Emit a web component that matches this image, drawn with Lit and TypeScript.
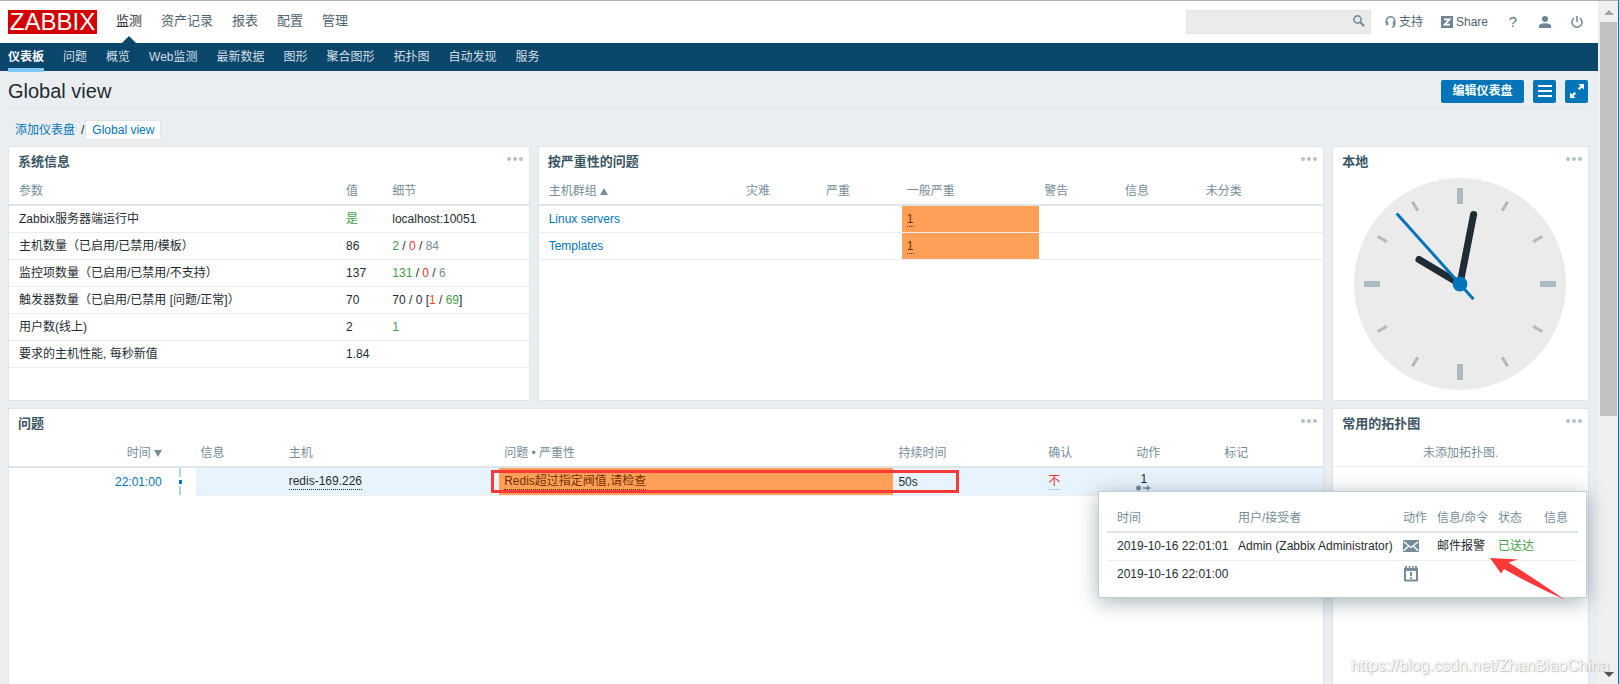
import { LitElement, html, css, svg } from "lit";
import { customElement } from "lit/decorators.js";

const MAIN_MENU = ["监测", "资产记录", "报表", "配置", "管理"];
const SUB_MENU = ["仪表板", "问题", "概览", "Web监测", "最新数据", "图形", "聚合图形", "拓扑图", "自动发现", "服务"];

type Part = [text: string, tone?: string];
const SYSTEM_ROWS: { name: string; value: Part; details: Part[] }[] = [
  { name: "Zabbix服务器端运行中", value: ["是", "green"], details: [["localhost:10051"]] },
  { name: "主机数量（已启用/已禁用/模板）", value: ["86"], details: [["2", "green"], [" / "], ["0", "red"], [" / "], ["84", "grey"]] },
  { name: "监控项数量（已启用/已禁用/不支持）", value: ["137"], details: [["131", "green"], [" / "], ["0", "red"], [" / "], ["6", "grey"]] },
  { name: "触发器数量（已启用/已禁用 [问题/正常]）", value: ["70"], details: [["70 / 0 ["], ["1", "orange"], [" / "], ["69", "green"], ["]"]] },
  { name: "用户数(线上)", value: ["2"], details: [["1", "green"]] },
  { name: "要求的主机性能, 每秒新值", value: ["1.84"], details: [] },
];

const SEVERITIES = ["灾难", "严重", "一般严重", "警告", "信息", "未分类"];
const HOST_GROUPS = ["Linux servers", "Templates"];

const part = ([text, tone]: Part) => (tone ? html`<span class=${tone}>${text}</span>` : text);

const shared = css`
  * { box-sizing: border-box; }
  a { color: #0275b8; text-decoration: none; }
  button {
    font: inherit;
    border: 0;
    margin: 0;
    padding: 0;
    background: none;
    color: inherit;
    cursor: pointer;
  }
  table { width: 100%; border-collapse: separate; border-spacing: 0; table-layout: fixed; }
  th, td { padding: 0 5px; text-align: left; white-space: nowrap; font-weight: normal; }
  th { height: 29px; color: #768d99; border-bottom: 2px solid #dfe4e7; }
  td { height: 27px; border-bottom: 1px solid #ebeef0; }
  th:first-child, td:first-child { padding-left: 10px; }
  svg { display: block; }
  .green { color: #429e47; }
  .red { color: #e33734; }
  .grey { color: #768d99; }
  .orange { color: #f24f1d; }
  .average { background: #ffa059; color: #733100; }
  .dotted { color: inherit; border-bottom: 1px dotted currentColor; }
  .dotted-block { display: inline-block; line-height: 15px; }
`;

@customElement("dash-widget")
class DashWidget extends LitElement {
  static properties = { heading: {} };
  declare heading: string;

  static styles = [
    shared,
    css`
      :host { display: block; background: #fff; border: 1px solid #dfe4e7; min-width: 0; }
      .head { display: flex; justify-content: space-between; height: 30px; padding: 0 6px 0 9px; }
      h4 { margin: 0; font-size: 13px; line-height: 29px; font-weight: bold; color: #3c5563; }
      .more { height: 24px; }
    `,
  ];

  render() {
    return html`
      <div class="head">
        <h4>${this.heading}</h4>
        <button class="more" aria-label="更多">
          <svg width="16" height="4" viewBox="0 0 16 4" fill="#b4c1c8">
            <circle cx="2" cy="2" r="2" /><circle cx="8" cy="2" r="2" /><circle cx="14" cy="2" r="2" />
          </svg>
        </button>
      </div>
      <slot></slot>
    `;
  }
}

@customElement("clock-face")
class ClockFace extends LitElement {
  static styles = css`
    :host { display: flex; justify-content: center; padding: 1px 2px 0 0; }
    svg { display: block; width: 212px; }
  `;

  render() {
    const ticks = Array.from({ length: 12 }, (_, i) =>
      i % 3 === 0
        ? svg`<rect x="-3" y="-96" width="6" height="16" transform="rotate(${i * 30})" />`
        : svg`<rect x="-1.5" y="-95" width="3" height="10.5" transform="rotate(${i * 30})" />`
    );
    return html`
      <svg viewBox="-106 -106 212 212" role="img" aria-label="22:01:53">
        <circle r="106" fill="#ebebeb" />
        <g fill="#acbbc2">${ticks}</g>
        <g stroke-linecap="round" stroke="#1f2c33" stroke-width="7">
          <line x1="0" y1="0" x2="-41" y2="-24.5" />
          <line x1="0" y1="0" x2="13.6" y2="-69.5" />
        </g>
        <line x1="13.5" y1="15.2" x2="-63.3" y2="-70.6" stroke="#0275b8" stroke-width="3" />
        <circle r="7.4" fill="#0275b8" />
      </svg>
    `;
  }
}

@customElement("app-root")
class AppRoot extends LitElement {
  static styles = [
    shared,
    css`
      :host {
        display: block;
        font: 12px/16px "Liberation Sans", Arial, "Noto Sans CJK SC", sans-serif;
        color: #1f2c33;
      }
      .window {
        display: flex;
        height: 100vh;
        overflow: hidden;
        background: #ebeef0;
        border-top: 1px solid #b2b2b2;
        border-right: 1px solid #1c6ca8;
      }
      .page { position: relative; flex: 1; min-width: 0; display: flex; flex-direction: column; }

      /* top bar */
      .top { display: flex; align-items: center; height: 42px; padding: 0 14px 0 8px; background: #fff; }
      .logo {
        width: 89px;
        height: 24px;
        background: #d40000;
        color: #fff;
        font-size: 24px;
        line-height: 24px;
        text-align: center;
      }
      .menu { display: flex; flex: 1; align-self: stretch; gap: 19px; margin-left: 19px; }
      .menu a { font-size: 13px; line-height: 40px; color: #4f6470; position: relative; }
      .menu a.on { color: #1f2c33; }
      .menu a.on::after {
        content: "";
        position: absolute;
        bottom: 0;
        left: 50%;
        margin-left: -7px;
        border: 7px solid transparent;
        border-top: 0;
        border-bottom-color: #0a466a;
      }
      .search {
        display: flex;
        align-items: center;
        width: 185px;
        height: 24px;
        background: #ebebeb;
        border: 1px solid #dfe4e7;
        margin-right: 14px;
      }
      .search input { flex: 1; min-width: 0; border: 0; outline: 0; background: none; font: inherit; padding: 0 5px; }
      .search button { padding: 0 5px 2px; }
      .tools { display: flex; align-items: center; gap: 18px; }
      .tools a { display: flex; align-items: center; gap: 3px; color: #4f6470; }
      .tools .icon { width: 14px; justify-content: center; }
      .tools .q { font-size: 15px; color: #5f7a88; }

      .sub { display: flex; gap: 19px; height: 28px; padding: 0 8px; background: #0a466a; flex: none; }
      .sub a { color: #d3dfe6; line-height: 26px; height: 29px; padding-top: 1px; }
      .sub a.on { color: #fff; font-weight: bold; border-bottom: 4px solid #7fc8f6; }

      /* title row */
      .title { display: flex; align-items: center; gap: 9px; height: 37px; padding-top: 4px; margin: 0 10px 0 8px; border-bottom: 1px solid #dfe4e7; }
      h1 { flex: 1; margin: 0; font-size: 20px; line-height: 24px; font-weight: normal; }
      .btn { display: flex; align-items: center; justify-content: center; width: 23px; height: 23px; background: #0275b8; border-radius: 2px; color: #fff; font-weight: bold; }
      .btn.wide { width: 83px; }
      .crumbs { display: flex; align-items: center; height: 20px; margin: 12px 15px 6px; }
      .crumbs .sep { padding: 0 1px 0 6px; }
      .crumbs .here { background: #fff; border: 1px solid #dfe4e7; line-height: 18px; padding: 0 6px; }

      .grid {
        flex: 1;
        display: grid;
        grid-template-columns: repeat(12, minmax(0, 1fr));
        grid-template-rows: 255px 1fr;
        gap: 7px 8px;
        padding: 0 9px 0 8px;
      }
      .c2 { grid-column: span 2; }
      .c4 { grid-column: span 4; }
      .c6 { grid-column: span 6; }
      .c10 { grid-column: span 10; }
      .tall { border-bottom: 0; }

      .tri { display: inline-block; border: 4px solid transparent; margin-left: 3px; }
      .tri.up { border-top: 0; border-bottom: 7px solid #768d99; }
      .tri.down { border-bottom: 0; border-top: 7px solid #768d99; }

      /* problem list */
      .problems td { height: 28px; background: #e8f4fd; }
      .problems .plain { background: #fff; border-bottom-color: #fff; }
      .problems .average { background: #ffa059; }
      .problems .when { text-align: right; }
      .problems .axis { padding: 0 0 0 12px; }
      .line { display: flex; flex-direction: column; align-items: center; width: 3px; height: 27px; }
      .line i { flex: 1; width: 2px; background: #a8d4ec; }
      .line b { width: 3px; height: 4px; margin: 3px 0 2px; background: #0275b8; }
      .ack { color: #e33734; border-bottom: 1px solid #c3ccd2; display: inline-block; line-height: 15px; }
      .act { display: flex; flex-direction: column; align-items: center; line-height: 12px; }

      .empty { height: 28px; line-height: 28px; text-align: center; color: #768d99; border-bottom: 1px solid #ebeef0; }

      /* floating details and marks */
      .popup {
        position: absolute;
        top: 490px;
        right: 11px;
        width: 489px;
        padding: 12px 8px 8px;
        background: #fff;
        border: 1px solid #c0cdd4;
        box-shadow: 0 4px 20px rgba(0, 39, 51, 0.35);
      }
      .popup td { height: 28px; padding-bottom: 2px; }
      .popup tr:last-child td { border-bottom: 0; }
      .frame { position: absolute; top: -3px; left: -13px; width: 468px; height: 23px; border: 3px solid #fc3838; pointer-events: none; }
      .anchor { position: relative; }
      .pointer { position: absolute; top: 66px; right: 21px; }
      .mark {
        position: absolute;
        right: 10px;
        bottom: 9px;
        font-size: 16px;
        line-height: 18px;
        color: #fff;
        text-shadow: 1px 1px 1px #b8b8b8, 0 0 1px #a8a8a8;
        opacity: 0.9;
        pointer-events: none;
        z-index: 2;
      }

      /* scroll bar */
      .track { display: flex; flex-direction: column; align-items: center; width: 20px; flex: none; background: #f0f0f0; padding: 9px 1px 7px 2px; }
      .thumb { width: 100%; height: 59%; margin: 7px 0 auto; background: #c1c1c1; }
    `,
  ];

  private header() {
    return html`
      <header class="top">
        <a class="logo" href="#">ZABBIX</a>
        <nav class="menu">
          ${MAIN_MENU.map((m, i) => html`<a href="#" class=${i ? "" : "on"}>${m}</a>`)}
        </nav>
        <form class="search" role="search">
          <input type="text" aria-label="搜索" />
          <button type="button" aria-label="搜索">
            <svg width="12" height="12" viewBox="0 0 12 12" fill="none" stroke="#768d99">
              <circle cx="4.5" cy="4.5" r="3.6" stroke-width="1.6" /><path d="M7.2 7.2 11.2 11.2" stroke-width="2.2" />
            </svg>
          </button>
        </form>
        <nav class="tools">
          <a href="#">
            <svg width="11" height="12" viewBox="0 0 11 12" fill="none" stroke="#768d99">
              <path d="M1.3 7V5a4.2 4.2 0 0 1 8.4 0v3.2c0 1.8-1 2.6-3 2.8" stroke-width="1.5" />
              <path d="M2 5.2v4M9 5.2v4" stroke-width="2.4" />
            </svg>
            支持
          </a>
          <a href="#">
            <svg width="12" height="12" viewBox="0 0 12 12">
              <rect width="12" height="12" fill="#6d8592" /><path d="M3 3.3h5.6L3.6 8.7H9" fill="none" stroke="#fff" stroke-width="1.7" />
            </svg>
            Share
          </a>
          <a class="icon q" href="#" aria-label="帮助">?</a>
          <a class="icon" href="#" aria-label="用户">
            <svg width="12" height="12" viewBox="0 0 12 12" fill="#6d8592">
              <circle cx="6" cy="3" r="3" /><path d="M0 12V9.8C0 8 3 7.2 6 7.2s6 .8 6 2.6V12z" />
            </svg>
          </a>
          <a class="icon" href="#" aria-label="退出">
            <svg width="12" height="12" viewBox="0 0 12 12" fill="none" stroke="#768d99" stroke-width="1.6">
              <path d="M6 0v6M3 2.2a5 5 0 1 0 6 0" />
            </svg>
          </a>
        </nav>
      </header>
      <nav class="sub">
        ${SUB_MENU.map((m, i) => html`<a href="#" class=${i ? "" : "on"}>${m}</a>`)}
      </nav>
    `;
  }

  private titleRow() {
    return html`
      <div class="title">
        <h1>Global view</h1>
        <button class="btn wide">编辑仪表盘</button>
        <button class="btn" aria-label="菜单">
          <svg width="14" height="12" viewBox="0 0 14 12" fill="#fff">
            <path d="M0 0h14v2H0zM0 5h14v2H0zM0 10h14v2H0z" />
          </svg>
        </button>
        <button class="btn" aria-label="全屏">
          <svg width="14" height="14" viewBox="0 0 14 14" fill="#fff">
            <path d="M8.500 0H14v5.500l-2-2-2.600 2.600-1.500-1.500L10.500 2zM0 8.500l2 2 2.600-2.600 1.500 1.500L3.500 12l2 2H0z" />
          </svg>
        </button>
      </div>
      <div class="crumbs">
        <a href="#">添加仪表盘</a><span class="sep">/</span><a class="here" href="#">Global view</a>
      </div>
    `;
  }

  private systemInfo() {
    return html`
      <dash-widget class="c4" heading="系统信息">
        <table>
          <colgroup><col style="width:63.9%" /><col style="width:8.9%" /><col /></colgroup>
          <thead><tr><th>参数</th><th>值</th><th>细节</th></tr></thead>
          <tbody>
            ${SYSTEM_ROWS.map(
              (r) => html`<tr><td>${r.name}</td><td>${part(r.value)}</td><td>${r.details.map(part)}</td></tr>`
            )}
          </tbody>
        </table>
      </dash-widget>
    `;
  }

  private severity() {
    return html`
      <dash-widget class="c6" heading="按严重性的问题">
        <table>
          <colgroup>
            ${[25.8, 10.2, 10.3, 17.5, 10.3, 10.3, 15.6].map((w) => html`<col style="width:${w}%" />`)}
          </colgroup>
          <thead>
            <tr><th>主机群组<span class="tri up"></span></th>${SEVERITIES.map((s) => html`<th>${s}</th>`)}</tr>
          </thead>
          <tbody>
            ${HOST_GROUPS.map(
              (g) => html`<tr>
                <td><a href="#">${g}</a></td>
                ${SEVERITIES.map((_, i) =>
                  i === 2 ? html`<td class="average"><a class="dotted" href="#">1</a></td>` : html`<td></td>`
                )}
              </tr>`
            )}
          </tbody>
        </table>
      </dash-widget>
    `;
  }

  private problems() {
    const widths = [12, 2.2, 6.7, 16.4, 30, 11.4, 6.7, 6.7, 7.9];
    return html`
      <dash-widget class="c10 tall" heading="问题">
        <table class="problems">
          <colgroup>${widths.map((w) => html`<col style="width:${w}%" />`)}</colgroup>
          <thead>
            <tr>
              <th class="when">时间<span class="tri down"></span></th><th></th><th>信息</th><th>主机</th>
              <th>问题 • 严重性</th><th>持续时间</th><th>确认</th><th>动作</th><th>标记</th>
            </tr>
          </thead>
          <tbody>
            <tr>
              <td class="when plain"><a href="#">22:01:00</a></td>
              <td class="axis plain"><div class="line"><i></i><b></b><i></i></div></td>
              <td></td>
              <td><a class="dotted dotted-block" href="#">redis-169.226</a></td>
              <td class="average">
                <div class="anchor">
                  <a class="dotted dotted-block" href="#">Redis超过指定阀值,请检查</a>
                  <span class="frame"></span>
                </div>
              </td>
              <td>50s</td>
              <td><a class="ack" href="#">不</a></td>
              <td>
                <button class="act">
                  1
                  <svg width="15" height="6" viewBox="0 0 15 6" fill="#768d99">
                    <circle cx="2.600" cy="3" r="2.500" /><path d="M7 2.200h4V.2L14.800 3 11 5.800V3.800H7z" />
                  </svg>
                </button>
              </td>
              <td></td>
            </tr>
          </tbody>
        </table>
      </dash-widget>
    `;
  }

  private popup() {
    return html`
      <div class="popup">
        <table>
          <colgroup>${[126, 165, 34, 61, 46, 39].map((w) => html`<col style="width:${w}px" />`)}</colgroup>
          <thead>
            <tr><th>时间</th><th>用户/接受者</th><th>动作</th><th>信息/命令</th><th>状态</th><th>信息</th></tr>
          </thead>
          <tbody>
            <tr>
              <td>2019-10-16 22:01:01</td>
              <td>Admin (Zabbix Administrator)</td>
              <td>
                <svg width="16" height="12" viewBox="0 0 16 12">
                  <rect width="16" height="12" fill="#768d99" />
                  <path d="M.8 1.800 8 7.400l7.200-5.600M.8 10.800 5.400 6.200M15.200 10.800 10.600 6.200" fill="none" stroke="#fff" stroke-width="1.300" />
                </svg>
              </td>
              <td>邮件报警</td>
              <td><span class="green">已送达</span></td>
              <td></td>
            </tr>
            <tr>
              <td>2019-10-16 22:01:00</td>
              <td></td>
              <td>
                <svg width="16" height="16" viewBox="0 0 16 16" fill="#768d99">
                  <path fill-rule="evenodd" d="M1 2h1V0h2v2h1.700V0h1.600v2h1.700V0h1.600v2H12V0h2v2h1v12.500q0 1-1 1H2q-1 0-1-1zM3 5v8.500h10V5z" />
                  <path d="M7 6h2v4H7zM7 11h2v1.700H7z" />
                </svg>
              </td>
              <td></td><td></td><td></td>
            </tr>
          </tbody>
        </table>
        <svg class="pointer" width="75" height="42" viewBox="0 0 75 42" fill="#fc3838">
          <path d="M0 0 28 1.500 18.500 4.500Q42 19 74.500 41.500 40 26 14 11L11 15.500z" />
        </svg>
      </div>
    `;
  }

  render() {
    return html`
      <div class="window">
        <div class="page">
          ${this.header()} ${this.titleRow()}
          <main class="grid">
            ${this.systemInfo()} ${this.severity()}
            <dash-widget class="c2" heading="本地"><clock-face></clock-face></dash-widget>
            ${this.problems()}
            <dash-widget class="c2 tall" heading="常用的拓扑图"><div class="empty">未添加拓扑图.</div></dash-widget>
          </main>
          ${this.popup()}
        </div>
        <div class="track">
          <svg width="10" height="5" viewBox="0 0 10 5" fill="#a3a3a3"><path d="M5 0 10 5H0z" /></svg>
          <div class="thumb"></div>
          <svg width="10" height="5" viewBox="0 0 10 5" fill="#505050"><path d="M0 0h10L5 5z" /></svg>
        </div>
        <div class="mark">https://blog.csdn.net/ZhanBiaoChina</div>
      </div>
    `;
  }
}
